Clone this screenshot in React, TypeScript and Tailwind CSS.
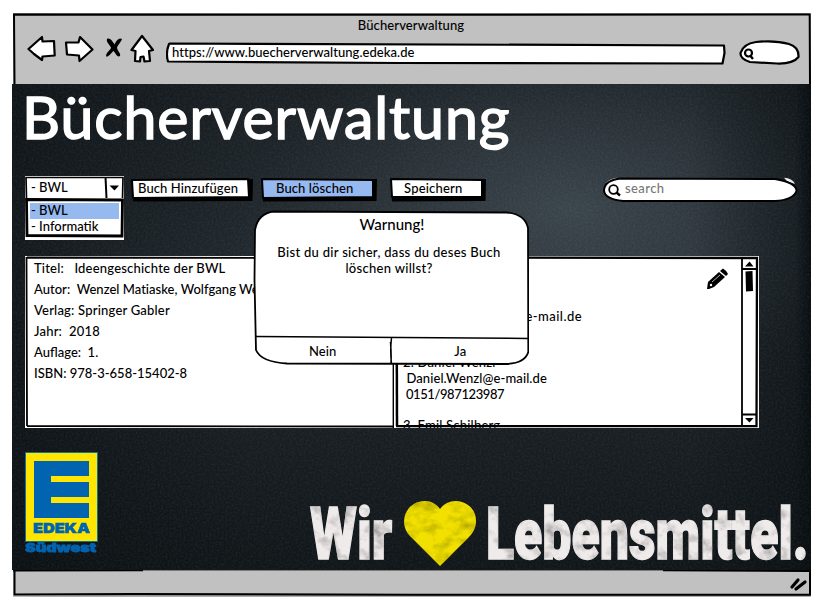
import type { ReactNode } from "react";

const stroke = { fill: "#fff", stroke: "#000", strokeWidth: 2.2, strokeLinejoin: "round" as const, strokeLinecap: "round" as const };

function Toolbar() {
  return (
    <header className="relative flex h-[71px] w-[798px] flex-col bg-[#c1c1c1]">
      <svg className="absolute inset-0" width="798" height="71" viewBox="0 0 798 71" fill="none">
        <path d="M0 .3H797" stroke="#777" strokeWidth=".8" />
        <path d="M1.500 71L1 1.500L400 1.800L796.700 1.400L797 71" stroke="#000" strokeWidth="2" />
      </svg>
      <div className="relative flex h-[25px] items-center justify-center pr-0.5 pt-px text-[13px] tracking-[0.1px]">Bücherverwaltung</div>
      <div className="relative flex items-start pl-[14px] -mt-[5px]">
        <svg className="mt-[2px]" width="30" height="28" viewBox="27 35 30 28"><path {...stroke} d="M28.500 49L42 37L42.500 41.500L54 41L54.700 55.500L42.500 56.500L42 60L34 54Z" /></svg>
        <svg className="ml-[7px] mt-[2px]" width="30" height="28" viewBox="64 35 30 28"><path {...stroke} d="M66 42.500L78.500 42.500L80 37L92.500 49.500L79.500 61L79 55.500L67 54.500Z" /></svg>
        <svg className="ml-[11px] mt-[4px]" width="18" height="22" viewBox="105 37 18 22"><path d="M107 39C110 37 113 42 114.500 44.500C116 41 119 37 122 39C121 42 117 46 117 48C118 52 121 53 120 56C117 58 115 52 113.500 51C111 53 109 57 106 56.500C106 52 111 50 111 47.500C109 44 106 42 107 39Z" /></svg>
        <svg className="ml-[7px] mt-px" width="24" height="29" viewBox="130 34 24 29"><path {...stroke} d="M142 36L153 50L149 51L150 61L144.500 61.500L143.500 56.500L140.500 57L140 61.500L135 61L135.500 51L131.500 50Z" /></svg>
        <div className="relative ml-[12px] mt-[8px] flex h-[24px] w-[560px] items-center pl-[6px] text-[13px] tracking-[0.05px]">
          <svg className="absolute inset-0" width="560" height="24" viewBox="166 41 560 24"><path {...stroke} d="M170 43.500L724 45.500L724.500 53L722.500 63.500L400 63L168 61.500Q165.500 53 169 44Z" /></svg>
          <span className="relative">https://www.buecherverwaltung.edeka.de</span>
        </div>
        <svg className="ml-[13px] mt-[6px]" width="62" height="27" viewBox="739 39 62 27">
          <path {...stroke} d="M756 42Q775 40 789 44Q799 47 798.500 57Q793 64 777 63.500L750 62Q740 59 740.500 53Q743 44 756 42Z" />
          <circle cx="748.500" cy="53" r="3.500" fill="none" stroke="#000" strokeWidth="2.200" /><path d="M750.500 56L753 59" stroke="#000" strokeWidth="2.400" />
        </svg>
      </div>
    </header>
  );
}

function Chalkboard() {
  return (
    <svg className="absolute inset-0" width="799" height="486" viewBox="0 0 799 486">
      <defs>
        <linearGradient id="base" x2="0" y2="1"><stop stopColor="#191f23" /><stop offset=".35" stopColor="#22292e" /><stop offset=".75" stopColor="#171d20" /><stop offset="1" stopColor="#101518" /></linearGradient>
        <radialGradient id="glow"><stop stopColor="#536069" stopOpacity=".52" /><stop offset=".5" stopColor="#4b575f" stopOpacity=".3" /><stop offset="1" stopColor="#465159" stopOpacity="0" /></radialGradient>
        <linearGradient id="edge"><stop stopColor="#080d10" stopOpacity=".6" /><stop offset=".3" stopColor="#080d10" stopOpacity="0" /><stop offset=".85" stopColor="#080d10" stopOpacity="0" /><stop offset=".98" stopColor="#080d10" stopOpacity=".5" /><stop offset="1" stopColor="#080d10" /></linearGradient>
        <filter id="grain" x="0" y="0" width="1" height="1"><feTurbulence type="fractalNoise" baseFrequency=".5" numOctaves="3" seed="4" /><feColorMatrix values="0 0 0 0 .6  0 0 0 0 .7  0 0 0 0 .76  .7 0 0 0 -.25" /></filter>
      </defs>
      <path d="M0 0H799V486H0Z" fill="url(#base)" />
      <ellipse cx="560" cy="125" rx="330" ry="190" fill="url(#glow)" />
      <path d="M0 0H799V486H0Z" fill="url(#edge)" />
      <path d="M0 0H799V486H0Z" filter="url(#grain)" opacity=".2" />
    </svg>
  );
}

function SketchButton({ children, box, width, fill, d }: { children: ReactNode; box: string; width: number; fill: string; d: string }) {
  return (
    <button className={`relative flex h-[25px] items-center text-[13px] ${box}`}>
      <svg className="absolute inset-0" width={width} height="25" viewBox={`0 0 ${width} 25`}>
        <path d={`M2 4L${width} 2L${width - 0.5} 24L3 24.500Z`} />
        <path d={d} fill={fill} stroke="#000" strokeWidth="2" strokeLinejoin="round" />
      </svg>
      <span className="relative -mt-px">{children}</span>
    </button>
  );
}

function CategorySelect() {
  return (
    <div className="relative h-[24px] w-[99px] bg-white text-[13px]">
      <div className="flex h-[24px] items-center pl-[6px]">- BWL</div>
      <svg className="absolute inset-0" width="99" height="24" viewBox="0 0 99 24" fill="none">
        <path d="M1 1.500H98L97.500 23H1.500Z" stroke="#000" strokeWidth="1.700" /><path d="M80.500 1L81.500 22" stroke="#000" strokeWidth="2" /><path d="M84.500 9.500H94L89.500 14.500Z" fill="#000" />
      </svg>
      <ul className="absolute left-0 top-[22px] z-10 h-[42px] w-[99px] border-b-2 border-white bg-white">
        <li className="mx-[5px] mt-[5px] h-4 bg-[#96b9f0] pl-px leading-[15px]">- BWL</li>
        <li className="mx-[5px] h-4 pl-px leading-[15px]">- Informatik</li>
        <svg className="absolute inset-0" width="99" height="40" viewBox="0 0 99 40" fill="none"><path d="M1.500 1.500L97.500 2L97 38L2 37.500Z" stroke="#000" strokeWidth="2.800" /></svg>
      </ul>
    </div>
  );
}

function SearchField() {
  return (
    <div className="relative flex h-[26px] w-[195px] items-center pl-[22px] text-[13px] tracking-[0.4px] text-[#777]">
      <svg className="absolute inset-0" width="195" height="26" viewBox="0 0 195 26">
        <path d="M3 6Q8 1 14 .8L10 5ZM181 .8Q189 1 192 7L184 4Z" fill="#eee" />
        <path d="M18 1.500L172 2Q194 6 193.500 14Q190 23 172 24L20 24Q1 22 1 13Q2 3 18 1.500Z" fill="#fff" stroke="#000" strokeWidth="2" />
        <circle cx="10.500" cy="12.500" r="4.300" fill="none" stroke="#000" strokeWidth="1.800" /><path d="M13.500 15.500L17 18.500" stroke="#000" strokeWidth="2.400" />
      </svg>
      <span className="relative -mt-[2px]">search</span>
    </div>
  );
}

function BookDetails() {
  return (
    <section className="relative w-[369px] shrink-0 overflow-hidden whitespace-pre bg-white pl-[9px] pt-[2px] text-[13px] leading-[21px] tracking-[0.2px]">
      <p>Titel:   Ideengeschichte der BWL</p>
      <p className="tracking-[0.02px]">Autor:  Wenzel Matiaske, Wolfgang Weber</p>
      <p>Verlag: Springer Gabler</p>
      <p>Jahr:  2018</p>
      <p className="tracking-normal">Auflage:  1.</p>
      <p className="tracking-normal">ISBN: 978-3-658-15402-8</p>
      <svg className="absolute inset-0" width="369" height="172" viewBox="0 0 369 172" fill="none"><path d="M2 1.500L369 2M368.500 0V172M2 170L369 170.500M1.500 1L2 170" stroke="#000" strokeWidth="1.800" /></svg>
    </section>
  );
}

function BorrowerList() {
  return (
    <section className="relative flex w-[365px] overflow-hidden bg-white">
      <div className="w-[347px] shrink-0 whitespace-pre pl-[9px] pt-[52px] text-[13px] leading-4 tracking-[0.2px]">
        <p className="tracking-[0.45px]"> Max.Mustermann@e-mail.de</p>
        <p className="mt-[30px]">2. Daniel Wenzl</p>
        <p className="tracking-[0.1px]"> Daniel.Wenzl@e-mail.de</p>
        <p className="tracking-[-0.4px]"> 0151/987123987</p>
        <p className="mt-[15px]">3. Emil Schilberg</p>
      </div>
      <svg className="absolute inset-0" width="365" height="172" viewBox="394 256 365 172" fill="none">
        <path d="M396.500 257L397 426" stroke="#000" strokeWidth="2.500" />
        <path d="M395 257.500L757 258L756.500 426L396 426.200" stroke="#000" strokeWidth="2.300" />
        <path d="M742 258V426M742 269H756M742 414.500H756" stroke="#000" strokeWidth="1.800" />
        <path d="M745 266.500L749.500 261.500L753.500 266.500ZM745 418H753.500L749.500 422.500ZM745.500 271.500L752.500 271L753 291L746 291.500Z" fill="#000" />
        <g transform="translate(707 268)">
          <path d="M0 21L1 14L12 4L18 9L7 19L2 21Z" fill="#000" /><path d="M13 3L16 .5Q20 3 21 6L19 8Z" fill="#000" /><path d="M5 14L13 7" stroke="#fff" strokeWidth=".7" /><circle cx="4" cy="17" r="1.200" fill="#fff" />
        </g>
      </svg>
    </section>
  );
}

function WarningDialog() {
  return (
    <div role="alertdialog" className="absolute left-[241px] top-[126px] z-20 flex h-[156px] w-[276px] flex-col text-center text-[13px]">
      <svg className="absolute inset-0" width="276" height="156" viewBox="0 0 276 156" fill="none">
        <path d="M21 1.500L254 2.500Q272 4 275 18L275.300 142Q272 153 254 154L34 153.500Q8 152 3 140L1.500 70L2 20Q5 3 21 1.500Z" fill="#fff" stroke="#000" strokeWidth="1.800" />
        <path d="M3 126.500L275 128.500M138.500 128Q137 140 138.500 154M137.500 132Q138.500 145 138 153" stroke="#000" strokeWidth="1.500" />
      </svg>
      <h2 className="relative mt-[4px] h-[20px] pl-0.5 text-[15px] leading-5">Warnung!</h2>
      <p className="relative mx-4 mt-[10px] h-[93px] pr-1 leading-4 tracking-[0.3px]">Bist du dir sicher, dass du deses Buch<br />löschen willst?</p>
      <div className="relative grid h-[28px] grid-cols-2 items-center pl-px pt-px tracking-[0.1px]"><button>Nein</button><button>Ja</button></div>
    </div>
  );
}

function EdekaLogo() {
  return (
    <div className="flex h-[102px] w-[73px] flex-col font-['Inter'] font-black text-[#0064b1]">
      <div className="flex h-[90px] flex-col items-center border border-[#0873a5] bg-[#ffe500] pt-[8px]">
        <svg width="55" height="57" viewBox="0 0 55 57"><path fill="#0064b1" d="M0 0H55V15H17V21H55V36H17V42H55V57H0Z" /></svg>
        <span className="mt-[2px] origin-center scale-x-[1.2] text-[13.500px] leading-4 [-webkit-text-stroke:0.500px_#0064b1]">EDEKA</span>
      </div>
      <span className="h-3 w-[54px] origin-left scale-x-[1.34] text-[12px] leading-3 [-webkit-text-stroke:0.800px_#0064b1]">Südwest</span>
    </div>
  );
}

function Slogan() {
  return (
    <div className="relative flex h-[72px] w-[500px] font-['Roboto'] text-[72px] font-black leading-[72px] text-[#eeebea]">
      <div className="w-[93px] pt-[2px]"><span className="inline-block origin-left scale-x-[0.75] [-webkit-text-stroke:1.500px_#eeebea] [filter:url(#chalk)]">Wir</span></div>
      <svg className="mt-[3px] shrink-0" width="74" height="67" viewBox="0 0 74 67">
        <defs>
          <filter id="worn" x="0" y="0" width="1" height="1"><feTurbulence type="fractalNoise" baseFrequency=".06 .09" numOctaves="4" seed="8" /><feColorMatrix values="0 0 0 0 .35 0 0 0 0 .3 0 0 0 0 0 1.800 0 0 0 -.75" /><feComposite in2="SourceGraphic" operator="in" result="w" /><feMerge><feMergeNode in="SourceGraphic" /><feMergeNode in="w" /></feMerge></filter>
          <filter id="chalk" x="0" y="0" width="1" height="1"><feTurbulence type="fractalNoise" baseFrequency=".05 .08" numOctaves="4" seed="12" /><feColorMatrix values="0 0 0 0 .35 0 0 0 0 .33 0 0 0 0 .33 2 0 0 0 -.9" /><feComposite in2="SourceGraphic" operator="in" result="w" /><feMerge><feMergeNode in="SourceGraphic" /><feMergeNode in="w" /></feMerge></filter>
        </defs>
        <path filter="url(#worn)" fill="#f2e100" d="M37 66L8 37C-3 27 0 10 11 4C22-2 32 2 37 9C43 1 55-2 65 5C76 13 75 28 66 37Z" />
      </svg>
      <div className="ml-[9px] w-[322px] pt-[2px]"><span className="inline-block origin-left scale-x-[0.72] [-webkit-text-stroke:1.500px_#eeebea] [filter:url(#chalk)]">Lebensmittel.</span></div>
    </div>
  );
}

export default function App() {
  return (
    <div className="h-[608px] w-[823px] overflow-hidden bg-white pl-[13px] pt-[13px] font-['Lato','Noto_Sans',sans-serif] font-medium text-black">
      <Toolbar />
      <main className="relative -ml-px flex h-[486px] w-[799px] flex-col bg-[#1d2428] pl-[13px]">
        <Chalkboard />
        <h1 className="relative -ml-[3px] h-[92px] whitespace-nowrap text-[59px] font-normal leading-[65px] tracking-[0.95px] text-white [-webkit-text-stroke:1.500px_white] [stroke-linejoin:round]">Bücherverwaltung</h1>
        <div className="relative z-10 flex h-[80px] items-start">
          <CategorySelect />
          <SketchButton box="ml-[6px] mt-px w-[123px] pl-[8px] tracking-[0.1px]" width={123} fill="#fff" d="M2 3L118 2L119 20L3 21Z">Buch Hinzufügen</SketchButton>
          <SketchButton box="ml-[7px] mt-px w-[117px] pl-[16px] tracking-[0.1px]" width={117} fill="#96b9f0" d="M2 2L113 3L113 20L3 21Z">Buch löschen</SketchButton>
          <SketchButton box="ml-[12px] mt-px w-[97px] pl-[15px] tracking-[0.2px]" width={97} fill="#fff" d="M2 2L93 3L93 20L3 20Z">Speichern</SketchButton>
          <div className="ml-[117px] mt-px"><SearchField /></div>
        </div>
        <div className="relative flex h-[172px] w-[734px]"><BookDetails /><BorrowerList /></div>
        <div className="relative flex items-start pt-[24px]">
          <EdekaLogo />
          <div className="ml-[212px] mt-[45px]"><Slogan /></div>
        </div>
        <WarningDialog />
      </main>
      <footer className="relative h-[27px] w-[798px] bg-[#c1c1c1]">
        <svg width="798" height="27" viewBox="0 0 798 27" fill="none">
          <path d="M0 26.500H797V24L150 24Z" fill="#999" />
          <path d="M0 .3H797" stroke="#555" strokeWidth=".8" />
          <path d="M1.500 0V24.500L120 24L400 24.800H797L797 1L650 .2M0 .5L130 .3" stroke="#000" strokeWidth="2" />
          <path d="M779 17L785 10M783 19L792 12" stroke="#000" strokeWidth="3.200" strokeLinecap="round" />
        </svg>
      </footer>
    </div>
  );
}
